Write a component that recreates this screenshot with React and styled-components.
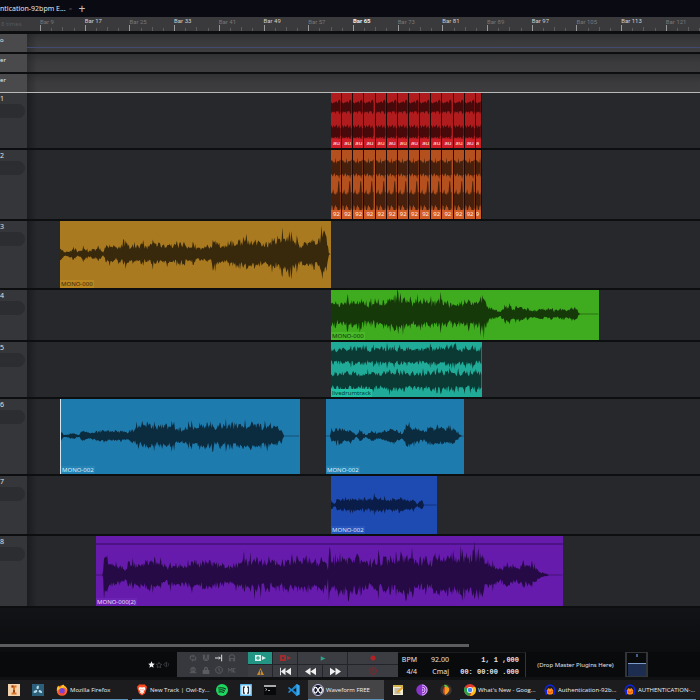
import React from 'react';
import styled, { createGlobalStyle } from 'styled-components';

const GlobalStyle = createGlobalStyle`
  * { box-sizing: border-box; }
  body {
    margin: 0;
    background: #0b0c0e;
    color: #d8d8da;
    font-family: "Noto Sans", "Open Sans", sans-serif;
    font-size: 7px;
    line-height: 8px;
  }
  button {
    margin: 0;
    padding: 0;
    border: 0;
    background: none;
    color: inherit;
    font: inherit;
  }
  svg { flex: none; }
`;

const Page = styled.div`
  display: flex;
  flex-direction: column;
  min-height: 100vh;
  overflow: hidden;
`;

const TabBar = styled.header`
  display: flex;
  align-items: center;
  height: 17px;
  background: #090a12;
`;

const Tab = styled.div`
  display: flex;
  align-items: center;
  justify-content: space-between;
  width: 73px;
  height: 16px;
  white-space: nowrap;
  color: #e4e4e6;
`;

const TabButton = styled.button`
  width: ${props => props.$wide ? '18px' : '5px'};
  font-size: ${props => props.$wide ? '12px' : '6px'};
  color: ${props => props.$wide ? '#c4c4c8' : '#55565c'};
`;

const Ruler = styled.div`
  display: flex;
  height: 14px;
  background: #3a3a3c;
  overflow: hidden;
`;

const RulerCorner = styled.div`
  flex: none;
  width: 27px;
  padding: 3px 0 0 1px;
  font-size: 6px;
  color: #58585b;
`;

const Marks = styled.div`
  flex: 1;
  display: flex;
  min-width: 0;
  padding-left: 13px;
`;

const Mark = styled.div`
  flex: none;
  display: flex;
  flex-direction: column;
  justify-content: space-between;
  width: 6.775%;
  padding-top: ${props => props.$level ? '0' : '1px'};
  font-family: Roboto, sans-serif;
  font-size: 6px;
  line-height: 7px;
  font-weight: ${props => props.$level === 2 ? 700 : 400};
  color: ${props => ['#77777a', '#d0d0d2', '#f0f0f2'][props.$level]};
`;

const Ticks = styled.div`
  display: grid;
  grid-template-columns: repeat(4, 1fr);
  align-items: end;
`;

const Tick = styled.i`
  height: ${props => props.$size}px;
  border-left: 1px solid ${props => props.$size > 5 ? '#98989a' : '#5c5c5f'};
`;

const Tracks = styled.main`
  border-top: 3px solid #0d0e10;
`;

const Row = styled.section`
  display: flex;
  height: ${props => props.$height}px;
  border-bottom: 2px solid #0d0e10;
`;

const GlobalRow = styled(Row)`
  height: ${props => props.$last ? '19px' : '20px'};
  border-bottom: ${props => props.$last ? '1px solid #b8b8b8' : '2px solid #0d0e10'};
`;

const GlobalHead = styled.div`
  flex: none;
  width: 27px;
  padding-top: 2px;
  background: #4a4a4c;
  color: #e6e6e8;
  font-size: 6px;
`;

const GlobalLane = styled.div`
  flex: 1;
  display: flex;
  align-items: flex-end;
  padding-bottom: 4px;
  background:
    linear-gradient(90deg, #1f202280, transparent 10px),
    linear-gradient(#303133, #3b3b3d 50%, #3d3d3f);
`;

const TempoLine = styled.div`
  flex: 1;
  height: 1px;
  background: #414b72;
`;

const TrackHead = styled.div`
  flex: none;
  width: 27px;
  padding-top: 2px;
  background: #35363a;
  color: #e0e0e2;
`;

const Pill = styled.div`
  width: 25px;
  height: 14px;
  margin-top: 1px;
  border-radius: 0 7px 7px 0;
  background: #2c2d31;
`;

const Lane = styled.div`
  flex: 1;
  display: flex;
  min-width: 0;
  background: linear-gradient(90deg, #1b1c1f, #27282b 10px);
`;

const Clip = styled.article`
  flex: none;
  display: flex;
  min-width: 0;
  overflow: hidden;
  background: ${props => props.$color};
  border-left: ${props => props.$edge ? '1px solid #d6e4ee' : '0'};
`;

const Layers = styled.div`
  flex: 1;
  display: grid;
  min-width: 0;
  > * { grid-area: 1 / 1; min-width: 0; }
`;

const Wave = styled.svg`
  display: block;
  width: 100%;
  height: 100%;
`;

const ClipLabel = styled.span`
  align-self: end;
  justify-self: start;
  padding: 0 1px;
  font-size: 6px;
  color: ${props => props.$color};
  background: ${props => props.$bg};
  white-space: nowrap;
`;

const Slice = styled.div`
  flex: ${props => props.$grow} 1 0;
  display: grid;
  min-width: 0;
  overflow: hidden;
  border-right: 1px solid #1f0805;
  > * { grid-area: 1 / 1; min-width: 0; }
`;

const SliceLabel = styled.span`
  align-self: end;
  padding: 0 ${props => props.$short ? '0' : '2px'};
  font-size: 6px;
  line-height: 9px;
  color: #ffe8e0;
  background: ${props => props.$bg};
`;

const Empty = styled.div`
  flex: 1;
  display: flex;
  flex-direction: column;
  justify-content: flex-end;
  min-height: 44px;
  padding-bottom: 5px;
  background: linear-gradient(#121316, #0c0d0f);
`;

const ScrollThumb = styled.div`
  width: 67%;
  height: 3px;
  background: #5d5d60;
`;

const Transport = styled.section`
  display: flex;
  height: 25px;
  background: #090a0c;
`;

const Stars = styled.div`
  flex: none;
  width: 177px;
  padding-right: 7px;
  display: flex;
  justify-content: flex-end;
  align-items: center;
  gap: 1px;
`;

const Options = styled.div`
  flex: none;
  width: 71px;
  padding: 1px 6px 1px 9px;
  display: grid;
  grid-template-columns: repeat(4, 13px);
  grid-template-rows: 12px 11px;
  place-items: center;
  background: #37383d;
`;

const Buttons = styled.div`
  flex: none;
  width: 150px;
  display: grid;
  grid-template-columns: 24px 24px 24px 24px 1fr;
  grid-template-rows: 12px 12px;
  gap: 1px;
  background: #232429;
`;

const Control = styled.button`
  grid-column: span ${props => props.$span || 1};
  display: flex;
  align-items: center;
  justify-content: center;
  background: ${props => props.$on ? '#239585' : '#3c3d42'};
`;

const Clock = styled.div`
  flex: none;
  width: 128px;
  padding: 0 6px 0 0;
  display: grid;
  grid-template-columns: 19px 32px 1fr;
  grid-template-rows: 13px 11px;
  align-items: center;
  justify-items: end;
  border-right: 1px solid #34353a;
  border-top: 1px solid #1c1d20;
  color: #e4e4e6;
`;

const Digits = styled.span`
  font-family: "Liberation Mono", monospace;
  font-weight: 700;
  white-space: pre;
`;

const Plugins = styled.div`
  flex: none;
  width: 99px;
  display: flex;
  align-items: center;
  justify-content: center;
  font-size: 6px;
  color: #e4e4e6;
`;

const Meter = styled.div`
  flex: none;
  width: 23px;
  border: 1px solid #34353a;
  border-width: 1px 2px;
  display: flex;
  flex-direction: column;
  justify-content: space-between;
  align-items: center;
`;

const MeterPeak = styled.i`
  width: 2px;
  height: 3px;
  margin-top: 1px;
  background: #44608e;
`;

const MeterLevel = styled.i`
  width: 18px;
  height: 13px;
  border-top: 1px solid #7d9bc8;
  background: #1d2d50;
`;

const Taskbar = styled.footer`
  display: flex;
  height: 23px;
  padding-left: 2px;
  border-top: 3px solid #101113;
  background: #1c1c1e;
`;

const Task = styled.button`
  flex: none;
  width: ${props => props.$wide ? '80px' : '24px'};
  padding: 0 2px;
  display: flex;
  color: #f0f0f2;
  font-family: "Open Sans", sans-serif;
  font-size: 6px;
`;

const TaskBody = styled.span`
  flex: 1;
  display: flex;
  align-items: center;
  gap: 2px;
  height: 20px;
  min-width: 0;
  padding-left: 4px;
  white-space: nowrap;
  background: ${props => props.$active ? '#444447' : 'none'};
  border-bottom: 1px solid ${props => props.$open ? '#5c93bd' : 'transparent'};
`;

// Horizontal units of the visible arrangement
const SPAN = 673;
const percent = value => `${(value / SPAN) * 100}%`;

const noise = seed => {
  let s = seed * 7919 + 17;
  return () => {
    s = (s * 16807) % 2147483647;
    return s / 2147483647;
  };
};

const level = (env, x) => {
  for (let i = 1; i < env.length; i++) {
    if (x <= env[i][0]) {
      const [x0, a0] = env[i - 1];
      const [x1, a1] = env[i];
      return a0 + ((a1 - a0) * (x - x0)) / (x1 - x0 || 1);
    }
  }
  return 0;
};

const wavePath = (env, mid, width, seed) => {
  const rand = noise(seed);
  const top = [];
  const bottom = [];
  let swell = 1;
  for (let x = 0; x <= width; x += 0.8) {
    // mostly a steady body, with a narrow peak now and then
    swell = swell * 0.5 + (0.55 + rand() * 0.55) * 0.5;
    const peak = rand() > 0.8 ? 1.35 : 1;
    const a = level(env, x) * swell * peak;
    const up = Math.max(0.25, a * (0.6 + rand() * 0.55));
    const down = Math.max(0.25, a * (0.6 + rand() * 0.5));
    top.push(`${x.toFixed(2)} ${(mid - up).toFixed(2)}`);
    bottom.unshift(`${x.toFixed(2)} ${(mid + down).toFixed(2)}`);
  }
  return `M${top.join('L')}L${bottom.join('L')}Z`;
};

const Waveform = ({ width, height, mids, env, color, seed, line }) => (
  <Wave viewBox={`0 0 ${width} ${height}`} preserveAspectRatio="none" aria-hidden="true">
    {line ? <path d={`M0 ${line}H${width}`} stroke="#45107c" strokeWidth="1.6" /> : null}
    {mids.map((mid, i) => <path key={mid} d={wavePath(env, mid, width, seed + i)} fill={color} />)}
  </Wave>
);

const tracks = [
  {
    height: 57,
    clips: [{ start: 304, width: 151, slices: 'au', color: '#b01b1e', wave: '#48090b', labelBg: '#cf1d28', mids: [14, 39], env: [[0, 6], [5, 8], [12, 6]] }],
  },
  {
    height: 71,
    clips: [{ start: 304, width: 151, slices: '92', color: '#b4501e', wave: '#46200c', labelBg: '#d25c26', mids: [18, 50], env: [[0, 9], [5, 9], [8, 14], [12, 9]] }],
  },
  {
    height: 69,
    clips: [{
      start: 33, width: 271, name: 'MONO-000', color: '#a97a1f', wave: '#38290c', text: '#3a2a0a', labelBg: '#b98620', mids: [33],
      env: [[0, 8], [2, 3], [8, 3], [14, 8], [18, 3], [24, 7], [28, 3], [38, 8], [43, 2], [46, 9], [58, 9], [64, 12], [76, 9], [90, 11], [120, 12], [138, 8], [150, 9], [155, 14], [162, 9], [178, 16], [200, 13], [212, 15], [216, 17], [229, 21], [240, 13], [258, 15], [266, 24], [268, 8], [269, 0]],
    }],
  },
  {
    height: 52,
    clips: [{
      start: 304, width: 268, name: 'MONO-000', color: '#3fab1f', wave: '#153909', text: '#12360a', labelBg: '#49b92a', mids: [24],
      env: [[0, 14], [30, 15], [45, 13], [60, 18], [80, 14], [96, 18], [120, 13], [140, 14], [153, 20], [157, 8], [166, 5], [170, 3], [174, 10], [182, 7], [190, 9], [204, 4], [212, 6], [225, 5], [235, 5], [245, 7], [248, 1], [250, 0]],
    }],
  },
  {
    height: 57,
    clips: [{ start: 304, width: 151, name: 'livedrumtrack', color: '#1fab97', wave: '#0a3a33', text: '#073a30', labelBg: '#22c3a5', mids: [14, 39], env: [[0, 9], [20, 10], [40, 9], [60, 11], [90, 9], [120, 11], [151, 9]] }],
  },
  {
    height: 77,
    clips: [
      {
        start: 33, width: 240, edge: true, name: 'MONO-002', color: '#1e7bae', wave: '#0b2b3e', text: '#d8eefa', labelBg: '#2583b6', mids: [37],
        env: [[0, 5], [3, 1], [12, 4], [18, 1], [22, 8], [26, 4], [32, 4], [43, 7], [50, 5], [56, 7], [64, 5], [74, 6], [77, 12], [84, 14], [96, 11], [110, 13], [120, 9], [132, 11], [140, 16], [156, 12], [170, 14], [185, 15], [198, 15], [206, 12], [216, 10], [222, 8], [224, 0]],
      },
      {
        start: 299, width: 138, name: 'MONO-002', color: '#1e7bae', wave: '#0b2b3e', text: '#d8eefa', labelBg: '#2583b6', mids: [37],
        env: [[0, 0], [4, 0], [5, 6], [15, 9], [26, 6], [30, 1], [34, 6], [40, 1], [45, 6], [52, 3], [60, 8], [68, 10], [76, 3], [82, 12], [90, 7], [100, 7], [106, 10], [128, 10], [132, 4], [136, 0]],
      },
    ],
  },
  {
    height: 60,
    clips: [{
      start: 304, width: 106, name: 'MONO-002', color: '#1e4bb2', wave: '#0a1c48', text: '#d8e2fa', labelBg: '#2855bc', mids: [29],
      env: [[0, 6], [3, 1], [6, 6], [19, 8], [32, 6], [44, 9], [58, 6], [66, 9], [74, 6], [84, 7], [86, 1], [91, 6], [93, 0]],
    }],
  },
  {
    height: 72,
    clips: [{
      start: 69, width: 467, name: 'MONO-000(2)', color: '#661bad', wave: '#260a45', text: '#eadcf8', labelBg: '#6c22b2', mids: [39], line: 8,
      env: [[0, 0], [7, 0], [8, 22], [16, 12], [26, 10], [29, 6], [32, 13], [44, 12], [52, 19], [62, 16], [68, 13], [86, 11], [98, 16], [112, 17], [124, 14], [134, 11], [144, 16], [158, 19], [178, 16], [196, 16], [212, 20], [231, 17], [232, 3], [233, 30], [236, 16], [258, 23], [276, 16], [294, 20], [312, 24], [326, 17], [348, 23], [368, 20], [382, 26], [392, 16], [401, 10], [404, 6], [410, 14], [417, 13], [419, 6], [427, 14], [437, 14], [442, 6], [448, 2], [454, 0]],
    }],
  },
];

const ClipView = ({ clip, height, after, seed }) => (
  <Clip
    $color={clip.color}
    $edge={clip.edge}
    style={{ marginLeft: percent(clip.start - after), width: percent(clip.width) }}
  >
    {clip.slices ? (
      [...Array(14)].map((_, i) => {
        const short = i === 13;
        return (
          <Slice key={i} $grow={short ? 1 : 2}>
            <Waveform width={short ? 6 : 11} height={height} mids={clip.mids} env={clip.env} color={clip.wave} seed={seed} />
            <SliceLabel $bg={clip.labelBg} $short={short}>{short ? clip.slices[0] : clip.slices}</SliceLabel>
          </Slice>
        );
      })
    ) : (
      <Layers>
        <Waveform width={clip.width} height={height} mids={clip.mids} env={clip.env} color={clip.wave} seed={seed} line={clip.line} />
        <ClipLabel $color={clip.text} $bg={clip.labelBg}>{clip.name}</ClipLabel>
      </Layers>
    )}
  </Clip>
);

const Glyph = ({ d, color = '#5b5c61', size = 8, fill }) => (
  <svg width={size} height={size} viewBox="0 0 12 12" fill={fill ? color : 'none'} stroke={fill ? 'none' : color} strokeWidth="1.5" aria-hidden="true">
    <path d={d} />
  </svg>
);

const star = 'M6 .5l1.7 3.6 3.9.5-2.9 2.8.8 4L6 9.4l-3.5 2 .8-4L.4 4.6l3.9-.5z';

const options = [
  { name: 'Loop', d: 'M2 8V3h6M6 1l2 2-2 2M10 4v5H4M6 7L4 9l2 2' },
  { name: 'Snap', d: 'M2 1v5a4 4 0 0 0 8 0V1M2 3h2M8 3h2M4 1v5a2 2 0 0 0 4 0V1' },
  { name: 'Punch', d: 'M0 6h8M6 4l2 2-2 2M10 1v10', color: '#e2e2e4' },
  { name: 'Click', d: 'M2 11V5a4 4 0 0 1 8 0v6M2 7h8M4 11V8M8 11V8' },
  { name: 'Scroll', d: 'M3 3h6v5H3zM1 10h10M6 1v9' },
  { name: 'Lock', d: 'M1 6h10v6H1zM3 6V4a3 3 0 0 1 6 0v2H7V4a1 1 0 0 0-2 0v2z', fill: true },
  { name: 'Clock', d: 'M6 1a5 5 0 1 0 .1 0M6 3v4l2 1' },
  { name: 'MIDI', d: 'M0 10V3l3 4 3-4v7M11 4H8v5h3' },
];

const TaskIcon = ({ kind }) => (
  <svg width="12" height="12" viewBox="0 0 24 24" aria-hidden="true">
    {icons[kind]}
  </svg>
);

const icons = {
  inventor: (
    <>
      <rect width="24" height="24" fill="#f3d3ae" />
      <path d="M7 3h10v4h-3v10h3v4H7v-4h3V7H7z" fill="#d9762a" />
      <path d="M7 3h4v4H7zM10 12h4v5h-4z" fill="#9b4313" />
    </>
  ),
  fan: (
    <>
      <rect width="24" height="24" fill="#2c607a" />
      <path d="M12 12C7 9 9 3 13 3c2 3 0 6-1 9zM12 12c6-1 9 3 8 6-4 1-7-2-8-6zM12 12c-2 6-6 7-9 5 0-4 5-5 9-5z" fill="#b6dbe9" />
      <circle cx="12" cy="12" r="2" fill="#254d63" />
    </>
  ),
  firefox: (
    <>
      <circle cx="12" cy="13" r="10.5" fill="#ff6a24" />
      <path d="M2 13C1 8 3 5 5 3c0 3 2 4 4 4 1-3 3-5 6-6 0 3 8 5 8 13-1-3-3-6-7-7z" fill="#ffc229" />
      <circle cx="12" cy="13.5" r="5.5" fill="#7943d6" />
      <path d="M3 13c3 8 12 8 15 2 2 7-11 11-15-2z" fill="#f52c61" />
    </>
  ),
  brave: (
    <>
      <path d="M6 1h12l2 3 2 1-1 5-3 9-6 4-6-4-3-9-1-5 2-1z" fill="#fb4b22" />
      <path d="M7 6l5 1 5-1 2 4-4 5 1 2-4 3-4-3 1-2-4-5z" fill="#fff" />
      <path d="M9 10l2 1-1 3zM15 10l-2 1 1 3zM11 16h2l-1 2z" fill="#fb4b22" />
    </>
  ),
  spotify: (
    <>
      <circle cx="12" cy="12" r="12" fill="#1ed760" />
      <path d="M5 8c5-1 10-1 14 2M6 12c4-1 8-1 11 2M6 16c4-1 6-1 9 1" stroke="#12301c" strokeWidth="2.2" fill="none" strokeLinecap="round" />
    </>
  ),
  brackets: (
    <>
      <rect width="24" height="24" rx="1" fill="#5eb7e8" />
      <rect x="3" y="3" width="18" height="18" fill="#fff" />
      <path d="M10 6H7v12h3M14 6h3v12h-3" stroke="#1d3242" strokeWidth="2.5" fill="none" />
    </>
  ),
  terminal: (
    <>
      <rect y="2" width="24" height="20" fill="#08090a" />
      <path d="M0 2h24v4H0z" fill="#a9aaac" />
      <path d="M3 9l3 2-3 2M8 13h4" stroke="#d8d8d8" strokeWidth="1.5" fill="none" />
    </>
  ),
  vscode: (
    <>
      <path d="M17 0l6 3v18l-6 3L7 14l-5 4-2-2 4-4-4-4 2-2 5 4z" fill="#1f8ad2" />
      <path d="M17 7v10l-7-5z" fill="#1c1c1e" />
      <path d="M17 0l6 3v18l-6 3z" fill="#36a6ee" />
    </>
  ),
  waveform: (
    <>
      <circle cx="12" cy="12" r="11" fill="#15162a" stroke="#c8c8ee" strokeWidth="2" />
      <path d="M3 12c2-8 5-8 9 0s7 8 9 0M3 12c2 8 5 8 9 0s7-8 9 0" stroke="#fff" strokeWidth="2.5" fill="none" />
    </>
  ),
  notepad: (
    <>
      <path d="M2 4h20v18H2z" fill="#f2ecd2" />
      <path d="M2 2h20v4H2z" fill="#d5b24a" />
      <path d="M5 10h11M5 14h8M5 18h12" stroke="#777569" strokeWidth="1.5" />
      <path d="M10 15L20 5l3 3-10 9-4 1z" fill="#e5a323" />
    </>
  ),
  tor: (
    <>
      <circle cx="12" cy="12" r="11.5" fill="#8834c8" />
      <path d="M12 2a10 10 0 0 1 0 20M12 6a6 6 0 0 1 0 12M12 10a2 2 0 0 1 0 4" stroke="#e3b8ff" strokeWidth="2" fill="none" />
    </>
  ),
  fruit: (
    <>
      <circle cx="12" cy="12" r="11.5" fill="#3b3534" />
      <path d="M10 5c7-1 10 4 8 9-2 5-6 7-8 8-2-4-3-13 0-17z" fill="#f79a1f" />
      <path d="M10 6l-1 15c-4-3-4-11 1-15z" fill="#e2471c" />
      <path d="M8 2c3-1 6 0 8 4-4 1-7 0-8-4z" fill="#62c43d" />
    </>
  ),
  chrome: (
    <>
      <circle cx="12" cy="12" r="12" fill="#e33b2e" />
      <path d="M1.6 6L12 12v12A12 12 0 0 1 1.6 6z" fill="#2ba24c" />
      <path d="M22.4 6A12 12 0 0 1 12 24l5-12V6z" fill="#fbc116" />
      <circle cx="12" cy="12" r="6" fill="#fff" />
      <circle cx="12" cy="12" r="4.5" fill="#4286f5" />
    </>
  ),
  audacity: (
    <>
      <path d="M4 18C0 9 6 2 12 2s12 7 8 16" stroke="#1224dc" strokeWidth="3" fill="none" />
      <path d="M1 12h5v10H3zM18 12h5l-2 10h-3z" fill="#1224dc" />
      <path d="M6 12l3-4 3 2 3-2 3 4v7l-3 2H9l-3-2z" fill="#ff8a16" />
      <path d="M7 15l3-3 2 2 2-2 3 3-3 2H9z" fill="#ed2b15" />
      <path d="M9 13h6v2H9z" fill="#ffe02a" />
    </>
  ),
};

const tasks = [
  { icon: 'inventor', title: 'Inventor' },
  { icon: 'fan', title: 'Fan' },
  { icon: 'firefox', text: 'Mozilla Firefox' },
  { icon: 'brave', text: 'New Track | Owl-Ey...' },
  { icon: 'spotify', title: 'Spotify' },
  { icon: 'brackets', title: 'Brackets' },
  { icon: 'terminal', title: 'Terminal' },
  { icon: 'vscode', title: 'Code' },
  { icon: 'waveform', text: 'Waveform FREE', active: true },
  { icon: 'notepad', title: 'Notepad' },
  { icon: 'tor', title: 'Tor' },
  { icon: 'fruit', title: 'Studio' },
  { icon: 'chrome', text: "What's New - Goog..." },
  { icon: 'audacity', text: 'Authentication-92b...' },
  { icon: 'audacity', text: 'AUTHENTICATION-...' },
];

const App = () => {
  return (
    <>
      <GlobalStyle />
      <Page>
        <TabBar>
          <Tab>
            <span>ntication-92bpm E...</span>
            <TabButton aria-label="Close tab">×</TabButton>
          </Tab>
          <TabButton $wide aria-label="New tab">+</TabButton>
        </TabBar>

        <Ruler>
          <RulerCorner>8 times</RulerCorner>
          <Marks>
            {[...Array(15)].map((_, i) => {
              const bar = 9 + i * 8;
              return (
                <Mark key={bar} $level={bar === 65 ? 2 : i % 2}>
                  <span>Bar {bar}</span>
                  <Ticks>
                    <Tick $size={6} />
                    <Tick $size={3} />
                    <Tick $size={4} />
                    <Tick $size={3} />
                  </Ticks>
                </Mark>
              );
            })}
          </Marks>
        </Ruler>

        <Tracks>
          {['o', 'er', 'er'].map((name, i) => (
            <GlobalRow key={i} $last={i === 2}>
              <GlobalHead>{name}</GlobalHead>
              <GlobalLane>{i === 0 ? <TempoLine /> : null}</GlobalLane>
            </GlobalRow>
          ))}
          {tracks.map((track, i) => (
            <Row key={i} $height={track.height}>
              <TrackHead>
                {i + 1}
                <Pill />
              </TrackHead>
              <Lane>
                {track.clips.map((clip, n) => {
                  const prev = track.clips[n - 1];
                  return (
                    <ClipView
                      key={n}
                      clip={clip}
                      height={track.height - 2}
                      after={prev ? prev.start + prev.width : 0}
                      seed={(i + 1) * 10 + n * 3}
                    />
                  );
                })}
              </Lane>
            </Row>
          ))}
        </Tracks>

        <Empty>
          <ScrollThumb />
        </Empty>

        <Transport>
          <Stars>
            <Glyph d={star} color="#f4f4f4" size={7} fill />
            <Glyph d={star} color="#4a4b50" size={6} />
            <Glyph d="M1 6l5-4v8zM8 3c2 2 2 4 0 6" color="#3c3d42" size={7} />
          </Stars>
          <Options>
            {options.map(option => (
              <button key={option.name} aria-label={option.name}>
                <Glyph d={option.d} color={option.color} fill={option.fill} />
              </button>
            ))}
          </Options>
          <Buttons>
            <Control $on aria-label="Automation play">
              <svg width="12" height="8" viewBox="0 0 12 8"><path d="M1 1h6v6H1zM8 2l4 2-4 2z" fill="#d9f3ee" /><path d="M4 2v4M2 4h4" stroke="#239585" /></svg>
            </Control>
            <Control aria-label="Automation record">
              <svg width="12" height="8" viewBox="0 0 12 8"><path d="M1 1h6v6H1zM8 2l4 2-4 2z" fill="#a32a2d" /><path d="M3 3h2v2H3z" fill="#3c3d42" /></svg>
            </Control>
            <Control $span={2} aria-label="Play"><Glyph d="M3 2l8 4-8 4z" color="#2ba38e" size={7} fill /></Control>
            <Control aria-label="Record"><Glyph d="M6 1a5 5 0 1 0 .1 0z" color="#b32125" size={6} fill /></Control>
            <Control aria-label="Warning">
              <Glyph d="M6 0l6 12H0zM5 4v4h2V4zM5 9v2h2V9z" color="#c98a2a" size={7} fill />
            </Control>
            <Control aria-label="Return to start"><Glyph d="M0 2h1v8H0zM6 2v8L1 6zM12 2v8L6 6z" color="#f0f0f0" size={11} fill /></Control>
            <Control aria-label="Rewind"><Glyph d="M6 2v8L0 6zM12 2v8L6 6z" color="#f0f0f0" size={11} fill /></Control>
            <Control aria-label="Fast forward"><Glyph d="M0 2l6 4-6 4zM6 2l6 4-6 4z" color="#f0f0f0" size={11} fill /></Control>
            <Control aria-label="Automation off"><Glyph d="M6 1a5 5 0 1 0 .1 0M6 3v4" color="#8c2528" size={8} /></Control>
          </Buttons>
          <Clock>
            <span>BPM</span><span>92.00</span><Digits>1, 1 ,000</Digits>
            <span>4/4</span><span>Cmaj</span><Digits>00: 00:00 .000</Digits>
          </Clock>
          <Plugins>(Drop Master Plugins Here)</Plugins>
          <Meter><MeterPeak /><MeterLevel /></Meter>
        </Transport>

        <Taskbar>
          {tasks.map((task, i) => (
            <Task key={i} $wide={!!task.text} aria-label={task.title}>
              <TaskBody $active={task.active} $open={!!task.text}>
                <TaskIcon kind={task.icon} />
                {task.text}
              </TaskBody>
            </Task>
          ))}
        </Taskbar>
      </Page>
    </>
  );
};

export default App;
